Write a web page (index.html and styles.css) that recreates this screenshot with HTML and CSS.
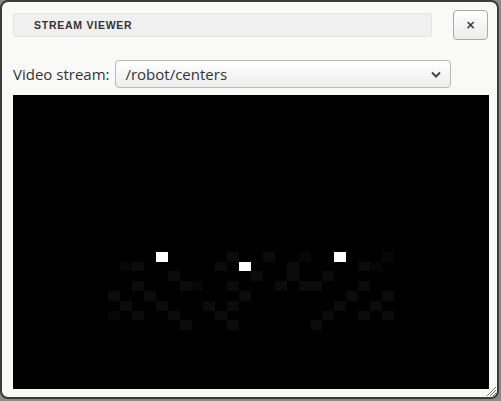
FILE: index.html
```html
<!DOCTYPE html>
<html>
<head>
<meta charset="utf-8">
<link rel="stylesheet" href="styles.css">
</head>
<body>
<div class="window">
  <div class="header">
    <div class="title">STREAM VIEWER</div>
    <button class="close">×</button>
  </div>
  <div class="controls">
    <label class="label">Video stream:</label>
    <div class="select">
      <span>/robot/centers</span>
      <svg class="chev" width="10" height="7" viewBox="0 0 10 7"><path d="M1 1.5 L5 5.5 L9 1.5" fill="none" stroke="#444" stroke-width="2"/></svg>
    </div>
  </div>
  <div class="view">
    <svg width="476" height="294" viewBox="0 0 40 30" preserveAspectRatio="none" shape-rendering="crispEdges">
      <rect width="40" height="30" fill="#000"/>
      <g fill="#0b0b0b">
        <rect x="18" y="16" width="1" height="1"/>
        <rect x="21" y="16" width="1" height="1"/>
        <rect x="10" y="17" width="1" height="1"/>
        <rect x="17" y="17" width="1" height="1"/>
        <rect x="23" y="17" width="1" height="1"/>
        <rect x="29" y="17" width="1" height="1"/>
        <rect x="13" y="18" width="1" height="1"/>
        <rect x="20" y="18" width="1" height="1"/>
        <rect x="23" y="18" width="1" height="1"/>
        <rect x="26" y="18" width="1" height="1"/>
        <rect x="10" y="19" width="1" height="1"/>
        <rect x="14" y="19" width="1" height="1"/>
        <rect x="18" y="19" width="1" height="1"/>
        <rect x="22" y="19" width="1" height="1"/>
        <rect x="24" y="19" width="1" height="1"/>
        <rect x="25" y="19" width="1" height="1"/>
        <rect x="29" y="19" width="1" height="1"/>
        <rect x="8" y="20" width="1" height="1"/>
        <rect x="11" y="20" width="1" height="1"/>
        <rect x="19" y="20" width="1" height="1"/>
        <rect x="28" y="20" width="1" height="1"/>
        <rect x="31" y="20" width="1" height="1"/>
        <rect x="9" y="21" width="1" height="1"/>
        <rect x="12" y="21" width="1" height="1"/>
        <rect x="16" y="21" width="1" height="1"/>
        <rect x="18" y="21" width="1" height="1"/>
        <rect x="27" y="21" width="1" height="1"/>
        <rect x="30" y="21" width="1" height="1"/>
        <rect x="10" y="22" width="1" height="1"/>
        <rect x="13" y="22" width="1" height="1"/>
        <rect x="17" y="22" width="1" height="1"/>
        <rect x="26" y="22" width="1" height="1"/>
        <rect x="29" y="22" width="1" height="1"/>
        <rect x="31" y="22" width="1" height="1"/>
        <rect x="14" y="23" width="1" height="1"/>
        <rect x="18" y="23" width="1" height="1"/>
        <rect x="25" y="23" width="1" height="1"/>
      </g>
      <g fill="#060606">
        <rect x="24" y="16" width="1" height="1"/>
        <rect x="31" y="16" width="1" height="1"/>
        <rect x="9" y="17" width="1" height="1"/>
        <rect x="30" y="17" width="1" height="1"/>
        <rect x="15" y="19" width="1" height="1"/>
        <rect x="8" y="22" width="1" height="1"/>
      </g>
      <g fill="#fff">
        <rect x="12" y="16" width="1" height="1"/>
        <rect x="27" y="16" width="1" height="1"/>
        <rect x="19" y="17" width="1" height="1"/>
      </g>
    </svg>
  </div>
  <div class="grip">
    <svg width="10" height="10" viewBox="0 0 10 10"><path d="M9 3 L3 9 M9 6 L6 9 M9 0 L0 9" stroke="#777" stroke-width="1"/></svg>
  </div>
</div>
</body>
</html>
```

FILE: styles.css
```css
* { box-sizing: border-box; }
html, body { margin: 0; padding: 0; }
body {
  background: #8a8a8a;
  width: 501px;
  height: 401px;
  overflow: hidden;
}
.window {
  position: relative;
  width: 499px;
  height: 399px;
  background: #f9f9f8;
  border: 2px solid #3b3b3b;
  border-radius: 8px;
  padding: 8px 8px 0 11px;
  display: flex;
  flex-direction: column;
}
.header {
  display: flex;
  align-items: center;
  gap: 21px;
  height: 30px;
}
.title {
  flex: 0 0 419px;
  height: 24px;
  background: #f0f0f0;
  border: 1px solid #e4e4e4;
  border-radius: 3px;
  padding-left: 20px;
  font-family: "Liberation Sans", Arial, sans-serif;
  font-weight: bold;
  font-size: 10.5px;
  letter-spacing: 0.75px;
  color: #333;
  line-height: 22px;
}
.close {
  width: 35px;
  height: 30px;
  border: 1px solid #a9a9a9;
  border-radius: 4px;
  background: linear-gradient(#ffffff, #ececec);
  font-family: "DejaVu Sans", sans-serif;
  font-weight: bold;
  font-size: 12px;
  color: #333;
  padding: 0;
  line-height: 28px;
}
.controls {
  display: flex;
  align-items: center;
  margin-top: 20px;
  height: 28px;
  gap: 6px;
}
.label {
  font-family: "Open Sans", sans-serif;
  font-size: 15px;
  color: #333;
}
.select {
  width: 336px;
  height: 28px;
  border: 1px solid #b9b9b9;
  border-radius: 4px;
  background: linear-gradient(#ffffff, #ededed);
  display: flex;
  align-items: center;
  justify-content: space-between;
  padding: 0 9px 0 9px;
  font-family: "Open Sans", sans-serif;
  font-size: 15px;
  color: #333;
}
.chev { display: block; }
.view {
  margin-top: 7px;
  width: 476px;
  height: 294px;
  background: #000;
}
.view svg { display: block; }
.grip {
  position: absolute;
  right: 0;
  bottom: 0;
  width: 10px;
  height: 10px;
}
.grip svg { display: block; }
```
